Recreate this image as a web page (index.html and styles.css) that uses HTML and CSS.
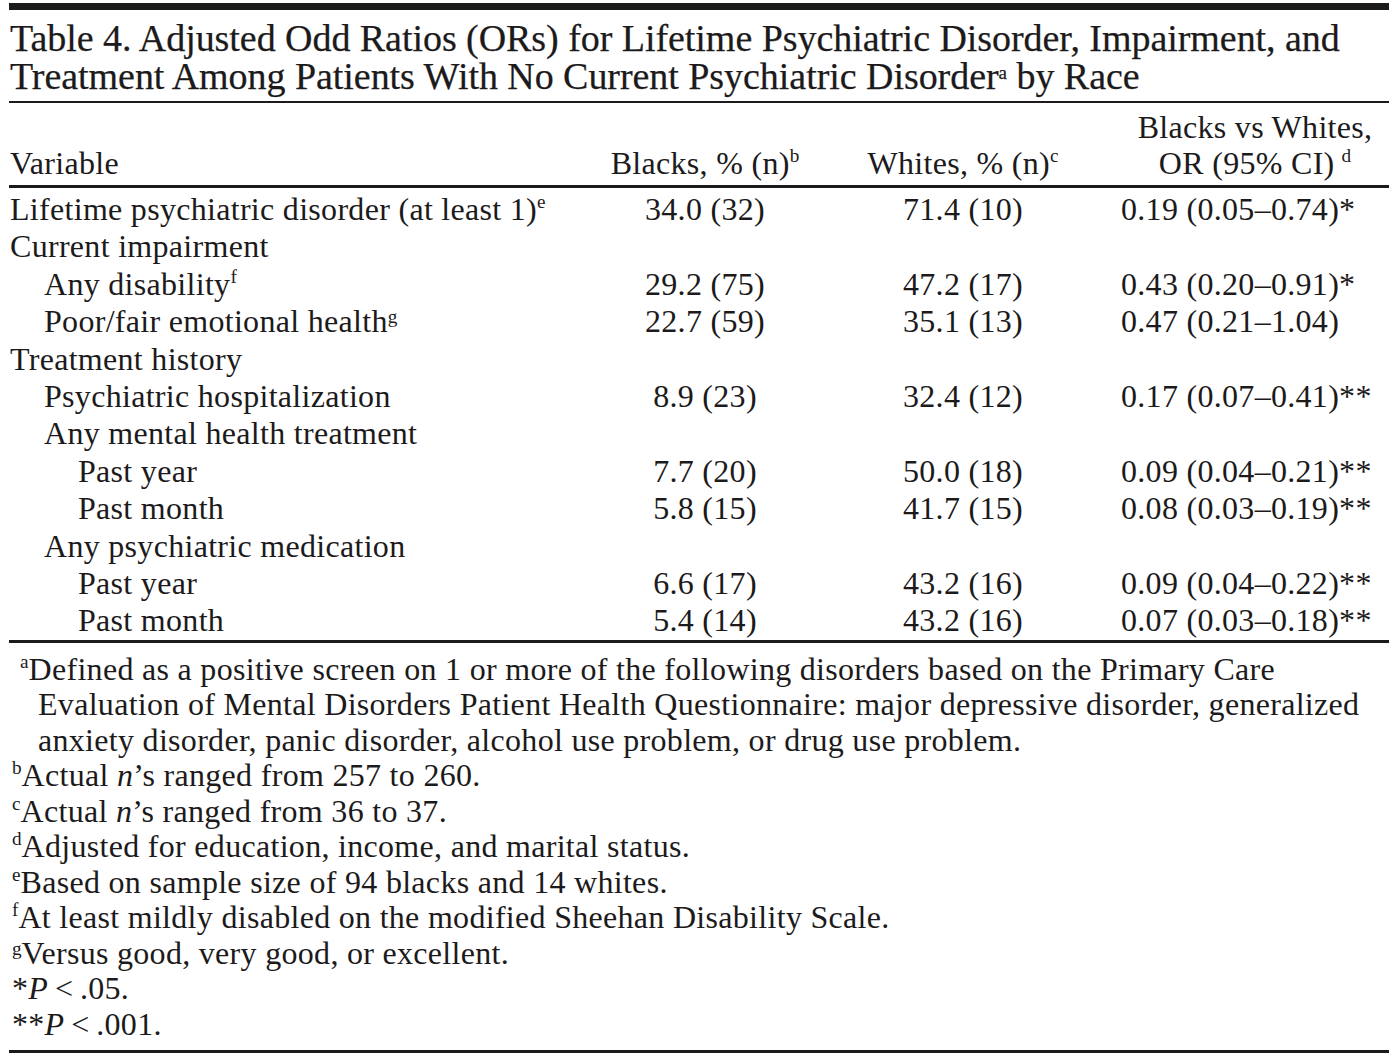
FILE: index.html
```html
<!DOCTYPE html>
<html lang="en">
<head>
<meta charset="utf-8">
<title>Table 4</title>
<link rel="stylesheet" href="styles.css">
</head>
<body>
<div class="page">
  <div class="topbar"></div>
  <h1 class="title"><span class="tline">Table 4. Adjusted Odd Ratios (ORs) for Lifetime Psychiatric Disorder, Impairment, and</span><span class="tline">Treatment Among Patients With No Current Psychiatric Disorder<sup class="tsup">a</sup> by Race</span></h1>
  <table class="data">
    <thead>
      <tr>
        <th class="c-var">Variable</th>
        <th class="c-b">Blacks, % (n)<sup>b</sup></th>
        <th class="c-w">Whites, % (n)<sup>c</sup></th>
        <th class="c-or">Blacks vs Whites,<br>OR (95% CI)<sup class="gap">d</sup></th>
      </tr>
    </thead>
    <tbody>
      <tr><td class="l1">Lifetime psychiatric disorder (at least 1)<sup>e</sup></td><td class="num">34.0 (32)</td><td class="num">71.4 (10)</td><td class="or">0.19 (0.05–0.74)*</td></tr>
      <tr><td class="l1">Current impairment</td><td></td><td></td><td></td></tr>
      <tr><td class="l2">Any disability<sup>f</sup></td><td class="num">29.2 (75)</td><td class="num">47.2 (17)</td><td class="or">0.43 (0.20–0.91)*</td></tr>
      <tr><td class="l2">Poor/fair emotional health<sup class="low">g</sup></td><td class="num">22.7 (59)</td><td class="num">35.1 (13)</td><td class="or">0.47 (0.21–1.04)</td></tr>
      <tr><td class="l1">Treatment history</td><td></td><td></td><td></td></tr>
      <tr><td class="l2">Psychiatric hospitalization</td><td class="num">8.9 (23)</td><td class="num">32.4 (12)</td><td class="or">0.17 (0.07–0.41)**</td></tr>
      <tr><td class="l2">Any mental health treatment</td><td></td><td></td><td></td></tr>
      <tr><td class="l3">Past year</td><td class="num">7.7 (20)</td><td class="num">50.0 (18)</td><td class="or">0.09 (0.04–0.21)**</td></tr>
      <tr><td class="l3">Past month</td><td class="num">5.8 (15)</td><td class="num">41.7 (15)</td><td class="or">0.08 (0.03–0.19)**</td></tr>
      <tr><td class="l2">Any psychiatric medication</td><td></td><td></td><td></td></tr>
      <tr><td class="l3">Past year</td><td class="num">6.6 (17)</td><td class="num">43.2 (16)</td><td class="or">0.09 (0.04–0.22)**</td></tr>
      <tr><td class="l3">Past month</td><td class="num">5.4 (14)</td><td class="num">43.2 (16)</td><td class="or">0.07 (0.03–0.18)**</td></tr>
    </tbody>
  </table>
  <div class="notes">
    <p class="note note-a"><sup>a</sup>Defined as a positive screen on 1 or more of the following disorders based on the Primary Care<br>Evaluation of Mental Disorders Patient Health Questionnaire: major depressive disorder, generalized<br>anxiety disorder, panic disorder, alcohol use problem, or drug use problem.</p>
    <p class="note"><sup>b</sup>Actual <i>n</i>’s ranged from 257 to 260.</p>
    <p class="note"><sup>c</sup>Actual <i>n</i>’s ranged from 36 to 37.</p>
    <p class="note"><sup>d</sup>Adjusted for education, income, and marital status.</p>
    <p class="note"><sup>e</sup>Based on sample size of 94 blacks and 14 whites.</p>
    <p class="note"><sup>f</sup>At least mildly disabled on the modified Sheehan Disability Scale.</p>
    <p class="note"><sup class="low">g</sup>Versus good, very good, or excellent.</p>
    <p class="note">*<i>P</i>&thinsp;&lt;&thinsp;.05.</p>
    <p class="note">**<i>P</i>&thinsp;&lt;&thinsp;.001.</p>
  </div>
  <div class="endrule"></div>
</div>
</body>
</html>
```

FILE: styles.css
```css
html, body {
  margin: 0;
  padding: 0;
  background: #ffffff;
}

body {
  font-family: "Liberation Serif", "Times New Roman", serif;
  color: #1c1a1b;
}

.page {
  width: 1380px;
  margin-left: 9px;
  padding-top: 3px;
}

.topbar {
  height: 7px;
  background: #1c1a1b;
}

.title {
  margin: 0;
  padding: 9px 0 6px 1px;
  font-size: 38px;
  line-height: 38px;
  font-weight: normal;
  letter-spacing: -0.05px;
  -webkit-text-stroke: 0.25px #1c1a1b;
  white-space: nowrap;
  border-bottom: 2px solid #1c1a1b;
}

.tline {
  display: block;
  height: 38px;
}

.tsup {
  font-size: 0.5em;
  vertical-align: 0.55em;
  line-height: 0;
}

sup {
  font-size: 0.6em;
  vertical-align: 0.6em;
  line-height: 0;
  letter-spacing: 0;
}

sup.low {
  vertical-align: 0.45em;
}

sup.gap {
  margin-left: 7px;
}

.data {
  width: 100%;
  border-collapse: collapse;
  font-size: 32px;
  letter-spacing: 0.3px;
  table-layout: fixed;
}

.data th {
  font-weight: normal;
  vertical-align: bottom;
  line-height: 36px;
  padding: 6px 0 4px 0;
  border-bottom: 3px solid #1c1a1b;
}

.c-var {
  width: 581px;
  text-align: left;
  padding-left: 1px !important;
}

.c-b {
  width: 228px;
  text-align: center;
}

.c-w {
  width: 288px;
  text-align: center;
}

.c-or {
  text-align: center;
  padding-left: 14px !important;
}

.data td {
  line-height: 37.4px;
  padding: 0;
  white-space: nowrap;
}

.data tbody tr:first-child td {
  padding-top: 3px;
}

.data tbody tr:last-child td {
  padding-bottom: 0;
  border-bottom: 3px solid #1c1a1b;
}

.l1 { padding-left: 1px !important; }
.l2 { padding-left: 35px !important; }
.l3 { padding-left: 69px !important; }

.num {
  text-align: center;
}

.or {
  text-align: left;
  padding-left: 14px !important;
}

.notes {
  padding-top: 9px;
  padding-bottom: 8px;
  font-size: 32px;
  letter-spacing: 0.3px;
  line-height: 35.5px;
}

.note {
  margin: 0;
  padding-left: 15px;
  text-indent: -12px;
  white-space: nowrap;
}

.note-a {
  padding-left: 29px;
  text-indent: -18px;
}

.endrule {
  height: 3px;
  background: #1c1a1b;
}
```
